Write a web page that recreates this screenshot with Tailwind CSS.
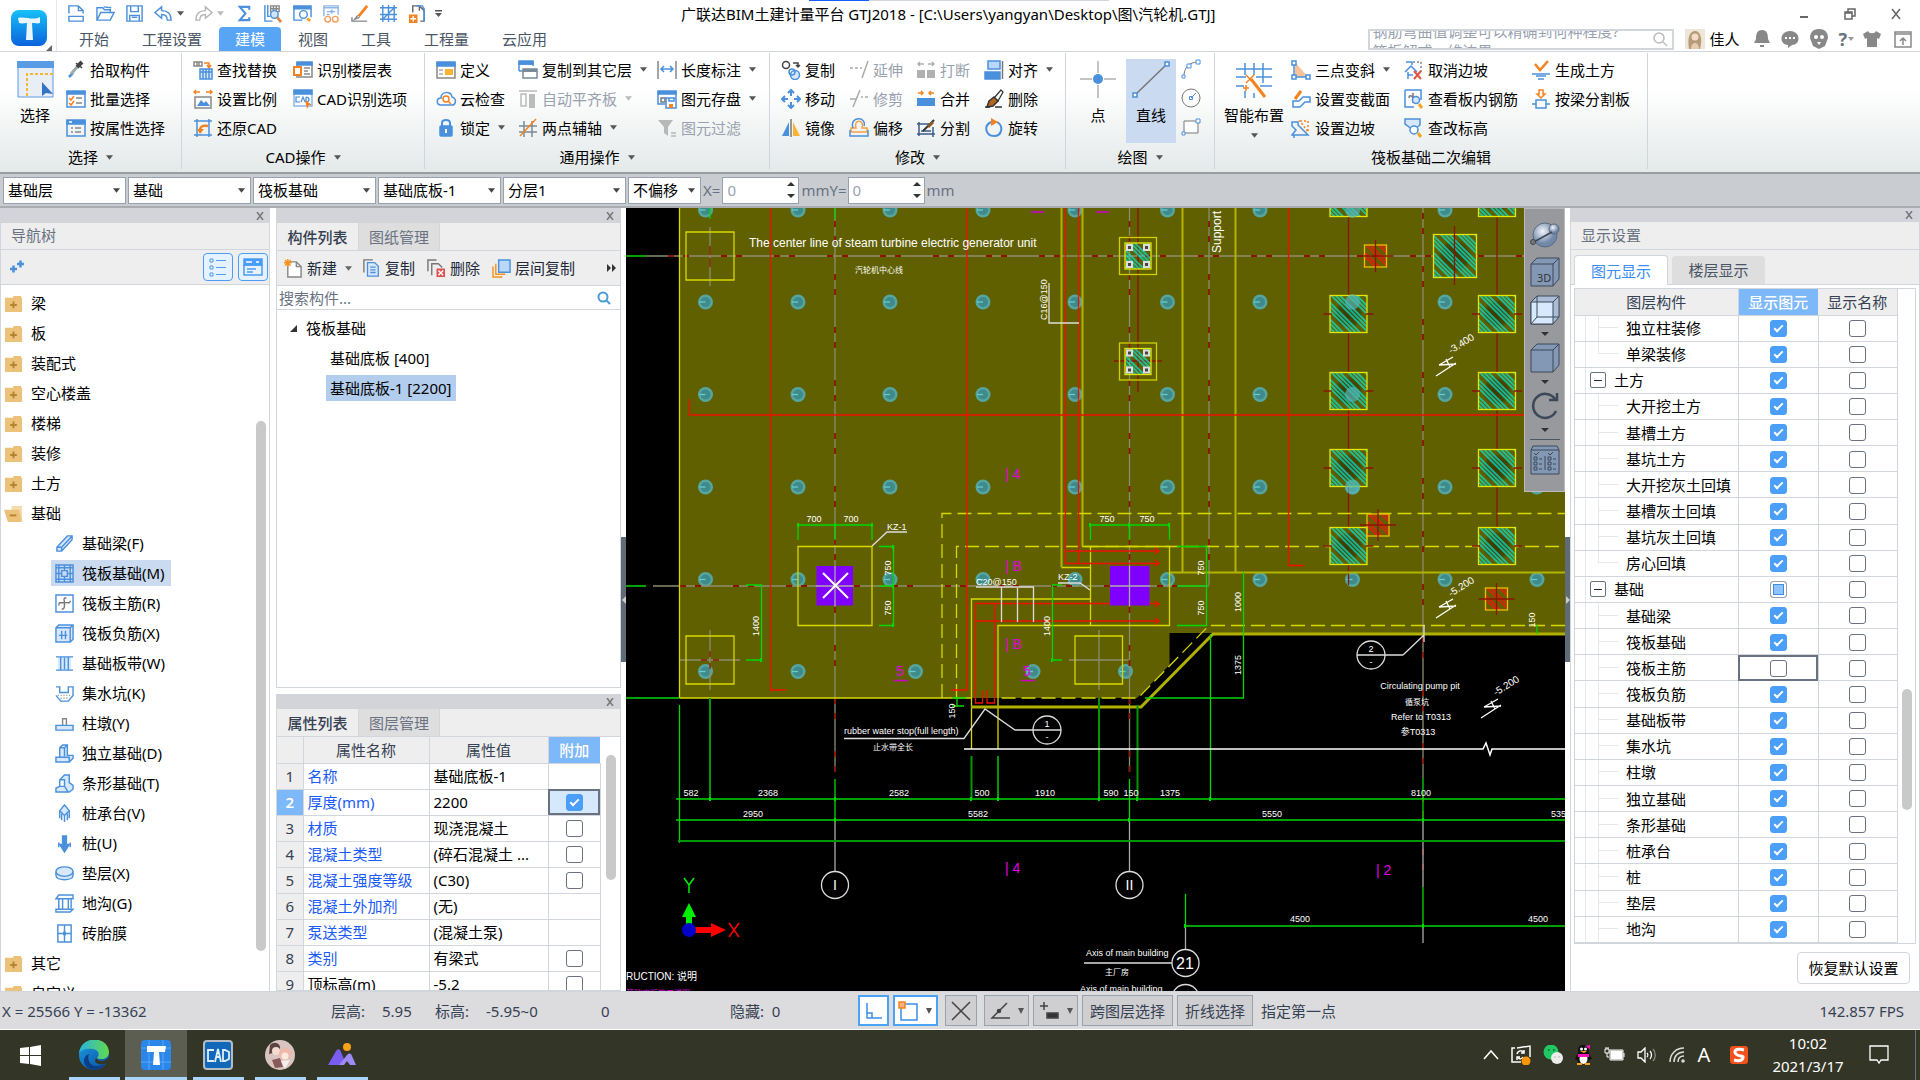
<!DOCTYPE html>
<html lang="zh-CN">
<head>
<meta charset="utf-8">
<title>广联达BIM土建计量平台 GTJ2018</title>
<script src="https://cdn.jsdelivr.net/npm/@tailwindcss/browser@4"></script>
</head>
<body class="h-screen flex flex-col overflow-hidden bg-white text-[15px] leading-5 text-black font-['Noto_Sans','Noto_Sans_CJK_SC',sans-serif]">

<!-- Icon sprite, every symbol on a 20 unit grid; stroke and fill defaults come from the svg that uses it -->
<svg class="absolute size-0" aria-hidden="true">
  <defs>
    <linearGradient id="gApp" x1="0" y1="0" x2="0" y2="1"><stop offset="0" stop-color="#16c0f8"/><stop offset="1" stop-color="#0b62dc"/></linearGradient>
    <linearGradient id="gEdge" x1="0" y1="0" x2="1" y2="1"><stop offset="0" stop-color="#1b9de2"/><stop offset="1" stop-color="#0c4a9e"/></linearGradient>
    <linearGradient id="gEdge2" x1="0" y1="0" x2="1" y2="0"><stop offset="0" stop-color="#28b4dc"/><stop offset="1" stop-color="#62d94e"/></linearGradient>
    <radialGradient id="gBall" cx=".4" cy=".35"><stop offset="0" stop-color="#f2f6fb"/><stop offset="1" stop-color="#7288a8"/></radialGradient>
  </defs>
    <symbol id="q-new" viewBox="0 0 20 20"><path d="M2 10V2h10l5 5v3M12 2v5h5M2 13h15v5H2z"/></symbol>
    <symbol id="q-open" viewBox="0 0 20 20"><path d="M1 17V4h6l2 2h6v3M1 17l4-8h14l-4 8zM8 3l8 1"/></symbol>
    <symbol id="q-save" viewBox="0 0 20 20"><path d="M2 2h16v16H2zM6 2v6h8V2M5 18v-6h10v6M7 14h6"/></symbol>
    <symbol id="q-undo" viewBox="0 0 20 20"><path d="M1 9l7-6v4c7 0 10 3 10 10h-4c0-4-2-6-6-6v4z"/></symbol>
    <symbol id="q-redo" viewBox="0 0 20 20"><path stroke="#b5b5b5" d="M19 9l-7-6v4C5 7 2 10 2 17h4c0-4 2-6 6-6v4z"/></symbol>
    <symbol id="q-sum" viewBox="0 0 20 20"><path stroke-width="2.2" d="M15 6V3H5l6 7-6 7h10v-3"/></symbol>
    <symbol id="q-calc" viewBox="0 0 20 20"><path d="M2 1v17h8M5 1v12h3"/><path stroke="#888" d="M8 2h9v6H8zM11 2v6M14 2v6M8 5h9"/><circle cx="12" cy="11" r="4" fill="#cfe3fa"/><path stroke="#d98a4b" stroke-width="3" d="M15 14l4 5"/></symbol>
    <symbol id="q-find" viewBox="0 0 20 20"><path fill="#4a90dc" d="M1 2h18v3H1z"/><path d="M1 2v15h9M19 5v9"/><circle cx="11" cy="11" r="4"/><path stroke="#f5a623" stroke-width="3" d="M15 15l3 3"/></symbol>
    <symbol id="q-glass" viewBox="0 0 20 20"><path stroke="#8db6e6" d="M2 13V2h15v9M2 4h15M5 8h3M5 11h3M14 8h-5l2-2M9 8l2 2"/><g stroke="#f5a060"><circle cx="6" cy="16" r="3"/><circle cx="14" cy="16" r="3"/></g></symbol>
    <symbol id="q-brush" viewBox="0 0 20 20"><path stroke="#f58220" stroke-width="3" d="M17 2L8 13"/><path stroke="#888" d="M1 14v4h16M7 12l-3 4 5-2"/></symbol>
    <symbol id="q-grid" viewBox="0 0 20 20"><path d="M4 1v18M10 1v18M16 1v18M1 4h18M1 11h18M1 16h18M4 16L16 4"/></symbol>
    <symbol id="q-add" viewBox="0 0 20 20"><path stroke="#666" d="M5 9V2h7l5 5v11h-4M12 2v5"/><path d="M8 2h7l2 3v13"/><path fill="#f58220" stroke="none" d="M1 11h9v9H1z"/><path stroke="#fff" d="M5.500 12.500v6M2.500 15.500h6"/></symbol>

    <symbol id="pick" viewBox="0 0 20 20"><path stroke="#4a90dc" stroke-width="2.500" d="M3 17l4-4"/><path stroke="#9aa" stroke-width="3" d="M5 14l7-8"/><path stroke="#444" stroke-width="4" d="M11 7l5-5"/><path stroke="#444" d="M10 3l6 5"/></symbol>
    <symbol id="batch" viewBox="0 0 20 20"><path d="M1 3h18v15H1z"/><path fill="#4a90dc" d="M1 2h18v3H1z"/><path stroke="#f58220" d="M3 9l2 2 3-4M3 14l2 2 3-4"/><path stroke="#888" d="M10 9h6M10 14h6"/></symbol>
    <symbol id="attr" viewBox="0 0 20 20"><path d="M1 3h18v15H1z"/><path fill="#4a90dc" d="M1 2h18v4H1z"/><path stroke="#fff" d="M3 4h3"/><path stroke="#888" d="M5 10h2M9 10h6M5 14h2M9 14h6"/></symbol>
    <symbol id="replace" viewBox="0 0 20 20"><path stroke="#888" d="M1 2h8v4H1zM4 2v4M6 2v4"/><path stroke="#f58220" d="M11 3h5v4M14 5l2 3 2-3"/><path fill="#d8e8fb" d="M7 9h12v10H7zM7 12h12M10 9v10M13 9v10M16 9v10"/></symbol>
    <symbol id="scale" viewBox="0 0 20 20"><path stroke="#f58220" d="M1 3h6M13 3h6M3 1L1 3l2 2M17 1l2 2-2 2"/><path stroke="#888" d="M2 8h16v11H2z"/><path fill="#4a90dc" stroke="none" d="M4 17l4-6 3 3 2-2 4 5z"/></symbol>
    <symbol id="restore" viewBox="0 0 20 20"><path d="M4 1v18M16 1v18M1 3h18M1 17h18"/><path stroke="#f58220" stroke-width="2.500" d="M7 13c0-5 3-6 8-5"/><path fill="#f58220" stroke="none" d="M4 11h7l-4 5z"/></symbol>
    <symbol id="floor" viewBox="0 0 20 20"><path stroke="#888" d="M4 3h15v14H4z"/><path fill="#4a90dc" d="M4 2h15v3H4z"/><path stroke="#f58220" stroke-width="2" fill="#fff" d="M1 7h7v8H1z"/><path stroke="#888" d="M11 8h6M11 11h4M11 14h6"/></symbol>
    <symbol id="cadopt" viewBox="0 0 20 20"><path stroke="#8db6e6" d="M1 3h18v14H1z"/><path fill="#4a90dc" d="M1 1h18v4H1z"/><path stroke-width="1.200" d="M7 8H3v5h4M8 13l2-5 2 5M13 8v5c4 0 4-5 0-5"/><path fill="#f58220" stroke="none" d="M12 11l7 5-3 0-2 4z"/></symbol>
    <symbol id="define" viewBox="0 0 20 20"><path stroke="#888" d="M1 3h18v15H1z"/><path fill="#4a90dc" d="M1 2h18v4H1z"/><path stroke="#aaa" d="M3 10h4M3 14h4"/><path fill="#f9b233" stroke="none" d="M9 9h8v6H9z"/></symbol>
    <symbol id="cloud" viewBox="0 0 20 20"><path d="M5 16c-5 0-5-7 0-7 0-7 10-7 11-1 5 1 4 8 0 8z"/><circle cx="10" cy="10" r="3" stroke="#f58220"/><path stroke="#f58220" d="M12 12l3 3"/></symbol>
    <symbol id="lock" viewBox="0 0 20 20"><path stroke-width="2" d="M6 9V5c0-4 8-4 8 0v4"/><rect x="4" y="8" width="12" height="10" rx="1" fill="#4a90dc"/><path stroke="#fff" stroke-width="2" d="M10 11v4"/></symbol>
    <symbol id="copyfloor" viewBox="0 0 20 20"><path d="M1 11V2h14v4M1 4h14M1 11h4"/><path fill="#4a90dc" d="M1 1h14v3H1z"/><path fill="#fff" stroke="#7a8a99" d="M5 9h14v9H5z"/><path fill="#7a8a99" stroke="none" d="M5 9h14v3H5z"/></symbol>
    <symbol id="autoalign" viewBox="0 0 20 20"><path stroke="#bbb" d="M1 2h18M3 5h5v12H3z"/><path fill="#bbb" stroke="none" d="M11 5h6v14h-6z"/></symbol>
    <symbol id="axis" viewBox="0 0 20 20"><path stroke="#7a8a99" d="M6 3v16M14 3v16M1 8h18M1 14h18"/><path stroke="#f58220" d="M2 18L18 1"/></symbol>
    <symbol id="length" viewBox="0 0 20 20"><path stroke="#888" d="M1 1v18M19 1v18"/><path d="M4 9h12M7 6L4 9l3 3M13 6l3 3-3 3"/></symbol>
    <symbol id="store" viewBox="0 0 20 20"><path d="M1 3h18v5M1 3v12h7"/><path fill="#4a90dc" d="M1 2h18v3H1z"/><path stroke="#777" d="M4 9h4v4H4z"/><path fill="#fff" d="M9 9h10v10H9zM12 9v3h5V9"/><path fill="#f58220" stroke="none" d="M12 15h4v4h-4z"/></symbol>
    <symbol id="filter" viewBox="0 0 20 20"><path fill="#b8b8b8" stroke="none" d="M1 2h15l-5 7v9l-4-3V9z"/><path stroke="#b8b8b8" d="M14 15h5M14 18h5"/></symbol>
    <symbol id="copy" viewBox="0 0 20 20"><circle cx="5" cy="5" r="3.500" stroke="#444"/><circle cx="14" cy="15" r="4.500" fill="#d8e8fb"/><circle cx="11" cy="12" r="3" /><path stroke="#444" d="M12 3h5v4M15 5l2 2 2-2"/></symbol>
    <symbol id="move" viewBox="0 0 20 20"><path stroke-width="2" d="M10 2v5M10 13v5M2 10h5M13 10h5M7 4l3-3 3 3M7 16l3 3 3-3M4 7l-3 3 3 3M16 7l3 3-3 3"/></symbol>
    <symbol id="mirror" viewBox="0 0 20 20"><path fill="#4a90dc" stroke="none" d="M8 4v14H1z"/><path fill="#f9b233" stroke="none" d="M12 4v14h7z"/><path stroke="#777" d="M10 1v18"/></symbol>
    <symbol id="extend" viewBox="0 0 20 20"><path stroke="#aaa" d="M1 8h3M6 8h3M11 8h2M19 1l-6 17"/></symbol>
    <symbol id="trim" viewBox="0 0 20 20"><path stroke="#aaa" d="M1 10h6M12 8h2M16 8h3M11 1L4 18"/></symbol>
    <symbol id="offset" viewBox="0 0 20 20"><path stroke="#f9a03f" d="M7 10c-3-9 9-9 6 0h5v4H2v-4z"/><path d="M1 12v6h18v-6M4 10c-4-12 14-12 11-2"/></symbol>
    <symbol id="break" viewBox="0 0 20 20"><path fill="#b0b0b0" stroke="none" d="M1 10h8v8H1zM11 10h8v8h-8z"/><path stroke="#b0b0b0" d="M2 4h6M12 4h6M4 2L2 4l2 2M16 2l2 2-2 2"/></symbol>
    <symbol id="merge" viewBox="0 0 20 20"><path fill="#4a90dc" stroke="none" d="M1 9h18v8H1z"/><path stroke="#f58220" d="M2 4h5M13 4h5M5 2l2 2-2 2M15 2l-2 2 2 2"/></symbol>
    <symbol id="split" viewBox="0 0 20 20"><path stroke="#3b5b8c" d="M1 6h12M3 4v14M1 16h18M17 9v10M5 13h10"/><path stroke="#333" stroke-width="2" d="M7 13L18 2"/><path stroke="#8a5a2b" stroke-width="3" d="M12 9l5-5"/></symbol>
    <symbol id="align" viewBox="0 0 20 20"><path fill="#b9d7fa" d="M4 1h12v8H4z"/><path fill="#4a90dc" d="M1 12h15v7H1z"/><path stroke="#777" d="M18.500 1v18"/></symbol>
    <symbol id="erase" viewBox="0 0 20 20"><path stroke="#333" stroke-width="1.200" fill="#fff" d="M10 9l7-8 2 2-5 9z"/><path fill="#b5651d" stroke="#333" d="M5 12l5-4 4 4-5 5-6 1z"/><path stroke="#333" d="M1 18h5M11 18h7"/></symbol>
    <symbol id="rotate" viewBox="0 0 20 20"><path stroke-width="2" d="M7 4C-1 8 2 18 10 18S20 8 13 4"/><path fill="#f58220" stroke="none" d="M7 0l7 4-7 4z"/></symbol>

    <symbol id="slope3" viewBox="0 0 20 20"><path fill="#f9c39a" stroke="none" d="M4 2v15h13z"/><path d="M3 3v14h14" /><path fill="#fff" d="M1 1h4v4H1zM1 15h4v4H1zM15 15h4v4h-4z"/></symbol>
    <symbol id="section" viewBox="0 0 20 20"><path stroke="#f58220" stroke-width="3" d="M10 2L4 10"/><path d="M2 18v-6h6l4-4h7v5h-5l-5 5z"/></symbol>
    <symbol id="slope" viewBox="0 0 20 20"><path d="M1 4h6v3l10 10H1l4-5-4-4zM3 17v3"/><path stroke="#f58220" stroke-dasharray="2 2" d="M9 3h8v11z"/></symbol>
    <symbol id="unslope" viewBox="0 0 20 20"><path d="M2 2h6v3M1 12l6-6 6 6M4 12v7M4 15h5"/><path stroke="#888" stroke-dasharray="2 2" d="M9 2h8v10"/><path stroke="#e05340" stroke-width="2" d="M10 11l7 8M17 11l-7 8"/></symbol>
    <symbol id="viewrebar" viewBox="0 0 20 20"><path d="M1 1h16v10M1 1v17h9"/><path stroke="#777" d="M5 9c0-3 3-3 4 0M9 4v10"/><circle cx="12" cy="11" r="3.500" fill="#d8e8fb"/><path stroke="#f5a623" stroke-width="3" d="M15 15l3 4"/></symbol>
    <symbol id="elev" viewBox="0 0 20 20"><path fill="#d8e8fb" d="M1 1h15v6l-5 4H8L1 6z"/><circle cx="10" cy="12" r="4" fill="#fff"/><path stroke="#f5a623" stroke-width="3" d="M14 15l3 4"/></symbol>
    <symbol id="earth" viewBox="0 0 20 20"><path stroke="#f58220" stroke-width="2.500" d="M4 4l5 6L17 1"/><path d="M1 14h18M5 16h10M7 19h6"/></symbol>
    <symbol id="beamsplit" viewBox="0 0 20 20"><path stroke="#f58220" d="M8 1h4v4h2l-4 4-4-4h2z"/><path d="M5 11h10v8H5zM1 15h4M15 15h4"/></symbol>

    <symbol id="n-beam" viewBox="0 0 20 20"><path fill="#d8e8fb" d="M2 14L13 2h5v4L7 18H2zM2 14h5v4M7 14L18 2"/></symbol>
    <symbol id="n-raft" viewBox="0 0 20 20"><path d="M1 1h18v18H1zM4 1v18M16 1v18M1 4h18M1 16h18M7 7h6v6H7zM10 1v6M10 13v6M1 10h6M13 10h6"/></symbol>
    <symbol id="n-main" viewBox="0 0 20 20"><path d="M1 1h18v18H1z"/><path stroke="#777" d="M4 12c0-3 0-3 6-3 5 0 6 1 6-2M12 4c-4 0-2 2-2 6s0 6-3 6"/></symbol>
    <symbol id="n-neg" viewBox="0 0 20 20"><path fill="#d8e8fb" d="M1 4l3-3h15v15l-3 3H1zM1 4h15v15M16 4l3-3M4 12h9M7 7v9M11 7v9"/></symbol>
    <symbol id="n-band" viewBox="0 0 20 20"><path fill="#d8e8fb" stroke="none" d="M3 3h14v14H3z"/><path d="M1 3h18M1 17h18M6 3v14M14 3v14M10 4v12"/></symbol>
    <symbol id="n-pit" viewBox="0 0 20 20"><path d="M1 3h4v6h9V3h5v9l-5 6H6l-5-6"/><path stroke="#888" stroke-dasharray="1 2" d="M3 12h14M6 15h9"/></symbol>
    <symbol id="n-pier" viewBox="0 0 20 20"><path stroke="#888" d="M8 12V5h4v7"/><path fill="#d8e8fb" d="M1 12h18v5H1z"/></symbol>
    <symbol id="n-iso" viewBox="0 0 20 20"><path fill="#d8e8fb" d="M1 14h4V4l3-3h5v11h6v3l-4 4H1zM5 14h10v5M5 4h5l3-3M10 4v9"/></symbol>
    <symbol id="n-strip" viewBox="0 0 20 20"><path fill="#d8e8fb" d="M1 19v-4l4-2V6l5-5h5v8l4 3v4l-4 3zM5 13h5V6H5M10 13l4 6"/></symbol>
    <symbol id="n-cap" viewBox="0 0 20 20"><path fill="#d8e8fb" d="M10 1l5 6-5 5-5-5z"/><path d="M5 7v8M15 7v8M10 12v7M7 10v7M13 10v7"/></symbol>
    <symbol id="n-pile" viewBox="0 0 20 20"><path fill="#4a90dc" d="M8 2h4v9h3l-5 8-5-8h3z"/><path d="M4 9v5M16 9v5"/></symbol>
    <symbol id="n-cush" viewBox="0 0 20 20"><path fill="#d8e8fb" d="M1 8v4c0 6 18 6 18 0V8"/><ellipse cx="10" cy="8" rx="9" ry="5" fill="#d8e8fb"/></symbol>
    <symbol id="n-ditch" viewBox="0 0 20 20"><path d="M1 5l3-4h15v4H1zM4 5v11M8 5v11M14 5v11M17 4v11M1 16h18l-3 3H1z"/></symbol>
    <symbol id="n-brick" viewBox="0 0 20 20"><path d="M3 1h14v18H3zM10 1v18M3 10h14"/><path stroke-width="3" d="M10 8v4"/></symbol>
    <symbol id="folder" viewBox="0 0 20 20"><path fill="#ecc27a" stroke="none" d="M10 2h8v3h-9zM1 4h18v15H1z"/><path stroke="#b5842f" stroke-width="2" d="M10 8v7M6.500 11.500h7"/></symbol>
    <symbol id="folder-open" viewBox="0 0 20 20"><path fill="#f5dcae" stroke="none" d="M8 2h11v15H8z"/><path fill="#ecc27a" stroke="none" d="M0 6h16l3 13H4z"/><path stroke="#b5842f" stroke-width="2" d="M6 12h7"/></symbol>
</svg>

<header class="relative shrink-0">
  <div class="absolute top-0 left-[809px] w-[60px] h-px bg-blue-600"></div>
  <div class="absolute top-0 left-[869px] w-[240px] h-px bg-gray-300"></div>
  <div class="flex h-[51px] border-b border-gray-300 box-content">
    <button class="relative w-[57px] shrink-0 border-r border-gray-200" aria-label="应用菜单">
      <svg class="ml-[11px] mt-1 size-[36px]" viewBox="0 0 36 36"><rect width="36" height="36" rx="8" fill="url(#gApp)"/><path fill="#e9f6ff" d="M7 8c7-2 15 3 22-1v6c-3 1-5 0-8 0l1 17h-7l1-17c-3 0-5 1-8 0z"/></svg>
      <svg class="absolute right-1 bottom-0 size-[6px]" viewBox="0 0 6 6"><path fill="#666" d="M6 0v6H0z"/></svg>
    </button>
    <div class="flex-1 flex flex-col min-w-0">
      <div class="h-[27px] flex items-center">
        <div id="quick" class="flex items-center w-[386px] shrink-0 pl-[10px]"></div>
        <h1 class="flex-1 pl-[238px] text-[15px] whitespace-nowrap">广联达BIM土建计量平台 GTJ2018 - [C:\Users\yangyan\Desktop\图\汽轮机.GTJ]</h1>
        <div class="flex gap-[34px] pr-[18px]">
          <button aria-label="最小化"><svg class="size-3" viewBox="0 0 12 12"><path stroke="#666" stroke-width="2" d="M2 9h8"/></svg></button>
          <button aria-label="还原"><svg class="size-3" viewBox="0 0 12 12" fill="none" stroke="#666" stroke-width="1.500"><path d="M4 4V1h7v7H8M1 4h7v7H1zM1 5h7"/></svg></button>
          <button aria-label="关闭"><svg class="size-3" viewBox="0 0 12 12"><path stroke="#666" stroke-width="1.500" d="M2 1l8 10M10 1L2 11"/></svg></button>
        </div>
      </div>
      <div class="h-6 flex items-center">
        <nav id="tabs" class="flex gap-px pl-[6px] h-full"></nav>
        <div class="flex-1"></div>
        <label class="relative w-[306px] h-[21px] border-2 border-gray-300 overflow-hidden text-gray-400 flex">
          <span class="absolute -top-2 left-0.5 text-[15px] leading-4 whitespace-nowrap">钢筋弯曲值调整可以精确到何种程度?</span>
          <span class="absolute top-3 left-0.5 text-[15px] leading-4 whitespace-nowrap">筏板解式一维边界</span>
          <input type="search" aria-label="搜索帮助" class="relative w-full bg-transparent outline-none">
          <svg class="absolute right-1 top-0 size-4" viewBox="0 0 16 16" fill="none" stroke="#bbb" stroke-width="1.500"><circle cx="7" cy="7" r="5"/><path d="M11 11l4 4"/></svg>
        </label>
        <a href="#" class="ml-[11px] flex items-center gap-1"><svg class="w-[20px] h-[20px]" viewBox="0 0 20 20"><rect width="20" height="20" fill="#efe6da"/><path fill="#b59b78" d="M4 20C2 8 5 2 10 2s8 7 5 18z"/><circle cx="10" cy="8" r="3.500" fill="#f6dcc6"/><path fill="#e9c9b0" d="M6 20c0-8 8-8 8 0z"/></svg>佳人</a>
        <div class="flex items-center gap-[9px] ml-[14px] pr-2">
          <svg class="size-[18px]" viewBox="0 0 18 18" fill="#888"><path d="M9 0c5 0 6 4 6 9l2 4H1l2-4c0-5 1-9 6-9zM7 15h4v2H7z"/></svg>
          <svg class="size-[20px]" viewBox="0 0 20 20" fill="#888"><path d="M10 2c11 0 11 14 2 14l-4 3v-3C-1 16-1 2 10 2z"/><path fill="#fff" d="M5 8h2v2H5zM9 8h2v2H9zM13 8h2v2h-2z"/></svg>
          <svg class="size-[20px]" viewBox="0 0 20 20" fill="#888"><path d="M10 0c8 0 9 6 9 9l-3 8-6 3-6-3-3-8c0-3 1-9 9-9z"/><circle cx="7" cy="8" r="2" fill="#fff"/><circle cx="13" cy="8" r="2" fill="#fff"/><path fill="#fff" d="M8 13h4l-2 3z"/></svg>
          <span class="text-lg text-gray-500 font-bold">?</span><svg class="-ml-2 size-[6px]" viewBox="0 0 6 6"><path fill="#999" d="M0 1h6L3 5z"/></svg>
          <svg class="size-[18px]" viewBox="0 0 18 18" fill="#888"><path d="M5 1c1 3 7 3 8 0l5 3-2 5-2-1v9H4V8L2 9 0 4z"/></svg>
          <svg class="size-[18px] ml-1" viewBox="0 0 18 18" fill="none" stroke="#888" stroke-width="1.500"><path d="M1 2h16v15H1zM1 4h16M9 15V8M6 11l3-3 3 3"/></svg>
        </div>
      </div>
    </div>
  </div>
  <div id="ribbon" class="flex h-[120px] bg-linear-to-b from-white from-30% to-[#e4e9e9] pt-px pb-[3px]"></div>
  <div class="h-[36px] border-t-2 border-t-[#9a9da0] border-b-2 border-b-[#a9adb2] bg-[#c9ccd1] flex items-center gap-[2px] pl-[3px] text-gray-500">
    <span id="combos" class="flex gap-[2px] text-black"></span>
    <label class="flex items-center">X=<input value="0" class="ml-0.5 w-[77px] h-[27px] border border-gray-400 bg-white px-1 text-gray-400"><svg class="-ml-3 mr-[6px] w-2 h-4" viewBox="0 0 8 16"><path fill="#333" d="M0 4l4-4 4 4zM0 12l4 4 4-4z"/></svg>mm</label>
    <label class="flex items-center -ml-0.5">Y=<input value="0" class="ml-px w-[77px] h-[27px] border border-gray-400 bg-white px-1 text-gray-400"><svg class="-ml-3 mr-[6px] w-2 h-4" viewBox="0 0 8 16"><path fill="#333" d="M0 4l4-4 4 4zM0 12l4 4 4-4z"/></svg>mm</label>
  </div>
</header>

<main class="flex-1 min-h-0 flex bg-white">
  <!-- Navigation tree -->
  <section class="w-[270px] shrink-0 flex flex-col border-x border-gray-300">
    <div class="h-[15px] shrink-0 bg-[#d2d4d9] flex justify-end items-center pr-[5px]"><button aria-label="关闭导航树"><svg class="size-2" viewBox="0 0 8 8"><path stroke="#777" stroke-width="1.500" d="M1 0l6 8M7 0L1 8"/></svg></button></div>
    <h2 class="h-[27px] shrink-0 bg-[#eee] border-b border-gray-300 pl-[10px] leading-6 text-gray-500">导航树</h2>
    <div class="h-[35px] shrink-0 bg-[#eee] border-b border-gray-300 flex items-center pl-2 pr-px gap-[5px]">
      <svg class="size-4 mr-auto" viewBox="0 0 16 16" stroke="#4a90dc" stroke-width="2.500"><path d="M1 10h7M4.500 6.500v7M8 5h7M11.500 1.500v7"/></svg>
      <button aria-label="列表视图" class="w-[30px] h-[28px] rounded border border-[#4a9cf5] bg-[#e6f2ff] grid place-items-center"><svg class="size-5" viewBox="0 0 20 20" fill="none" stroke="#4a9cf5"><path d="M2 2h3v3H2zM2 9h3v3H2zM2 16h3v3H2zM8 3.500h10M8 10.500h10M8 17.500h10"/></svg></button>
      <button aria-label="面板视图" class="w-[30px] h-[28px] rounded border border-[#4a9cf5] bg-[#e6f2ff] grid place-items-center"><svg class="size-5" viewBox="0 0 20 20" fill="none" stroke="#4a9cf5" stroke-width="1.500"><path fill="#4a9cf5" d="M1 2h18v6H1z"/><path stroke="#fff" d="M3 5h6M13 5h3"/><path d="M1 8h18v10H1zM4 12h9M4 15h6"/></svg></button>
    </div>
    <div class="flex-1 min-h-0 flex overflow-hidden">
      <ul id="nav" class="flex-1 pt-[3px] overflow-hidden"></ul>
      <div class="w-[13px]"><div class="mt-[136px] h-[530px] w-[10px] rounded-full bg-[#c9c9c9]"></div></div>
    </div>
  </section>

  <div class="w-[6px] shrink-0"></div>

  <!-- Component list and properties -->
  <section class="w-[345px] shrink-0 flex flex-col">
    <div class="flex-1 min-h-0 flex flex-col border border-t-0 border-gray-300">
      <div class="h-[15px] shrink-0 bg-[#d2d4d9] flex justify-end items-center pr-[6px]"><button aria-label="关闭构件列表"><svg class="size-2" viewBox="0 0 8 8"><path stroke="#777" stroke-width="1.500" d="M1 0l6 8M7 0L1 8"/></svg></button></div>
      <div class="h-[28px] shrink-0 flex bg-[#eee] border-b border-gray-300">
        <button class="w-[81px] font-medium text-gray-700">构件列表</button><button class="w-[82px] bg-[#dedede] border-x border-gray-300 text-gray-500">图纸管理</button>
      </div>
      <div class="h-[35px] shrink-0 flex items-center bg-[#eee] border-b border-gray-300 text-gray-800 whitespace-nowrap pl-[7px]">
        <button class="flex items-center gap-1 w-[79px]"><svg class="size-[19px]" viewBox="0 0 20 20" fill="#fff" stroke="#888" stroke-width="1.500"><path d="M4 3h9l5 5v11H4zM13 3v5h5"/><path stroke="#f5921e" d="M4 0v8M0 4h8M1 1l6 6M7 1L1 7"/></svg>新建<svg class="size-[7px] ml-1" viewBox="0 0 6 6"><path fill="#666" d="M0 1h6L3 5z"/></svg></button>
        <button class="flex items-center gap-1 w-[64px]"><svg class="size-[18px]" viewBox="0 0 20 20" fill="none" stroke="#777" stroke-width="1.500"><path d="M1 15V1h10"/><path fill="#d8e8fb" stroke="#4a90dc" d="M5 4h8l4 4v11H5zM8 9h6M8 12h6M8 15h6"/></svg>复制</button>
        <button class="flex items-center gap-1 w-[65px]"><svg class="size-[19px]" viewBox="0 0 20 20" fill="none" stroke="#777" stroke-width="1.500"><path d="M1 13V1h9M5 17V5h7l4 4"/><path fill="#e05050" stroke="none" d="M10 10h9v9h-9z"/><path stroke="#fff" d="M12 12l5 5M17 12l-5 5"/></svg>删除</button>
        <button class="flex items-center gap-1"><svg class="size-[19px]" viewBox="0 0 20 20" fill="none" stroke="#f5921e" stroke-width="1.500"><path d="M1 8v11h10M4 5v11h10"/><path fill="#b9d7fa" stroke="#4a90dc" d="M7 1h12v13H7z"/></svg>层间复制</button>
        <svg class="ml-auto mr-1 w-[9px] h-2" viewBox="0 0 9 8" fill="#333"><path d="M0 0l4 4-4 4zM5 0l4 4-4 4z"/></svg>
      </div>
      <label class="h-[24px] shrink-0 flex items-center border-b border-gray-300 pr-[9px]"><input type="search" placeholder="搜索构件..." aria-label="搜索构件" class="flex-1 px-0.5 outline-none placeholder:text-gray-500"><svg class="size-[14px]" viewBox="0 0 14 14" fill="none" stroke="#4a9ad5" stroke-width="2"><circle cx="6" cy="6" r="4.500"/><path d="M9 9l4 4"/></svg></label>
      <ul class="flex-1 pt-[3px]">
        <li class="h-[30px] flex items-center pl-[13px] gap-[9px]"><svg class="size-[7px]" viewBox="0 0 7 7"><path fill="#333" d="M7 0v7H0z"/></svg>筏板基础</li>
        <li class="h-[30px] flex items-center pl-[53px]">基础底板 [400]</li>
        <li class="h-[30px] flex items-center pl-[49px]"><span class="h-[26px] leading-[26px] px-1 bg-[#b3cdee]">基础底板-1 [2200]</span></li>
      </ul>
    </div>
    <div class="h-[297px] mt-[6px] shrink-0 flex flex-col border border-gray-300">
      <div class="h-[14px] shrink-0 bg-[#d2d4d9] flex justify-end items-center pr-[6px]"><button aria-label="关闭属性列表"><svg class="size-2" viewBox="0 0 8 8"><path stroke="#777" stroke-width="1.500" d="M1 0l6 8M7 0L1 8"/></svg></button></div>
      <div class="h-[28px] shrink-0 flex bg-[#eee] border-b border-gray-300">
        <button class="w-[81px] font-medium text-gray-700">属性列表</button><button class="w-[82px] bg-[#dedede] border-x border-gray-300 text-gray-500">图层管理</button>
      </div>
      <div class="flex-1 min-h-0 flex overflow-hidden">
        <table class="w-[323px] shrink-0 table-fixed border-collapse self-start">
          <colgroup><col class="w-[26px]"><col class="w-[126px]"><col class="w-[119px]"><col class="w-[52px]"></colgroup>
          <thead><tr class="h-[26px] bg-[#eee] text-gray-700"><th class="border-b border-r border-gray-300"></th><th class="font-normal border-b border-r border-gray-300">属性名称</th><th class="font-normal border-b border-r border-gray-300">属性值</th><th class="font-medium bg-[#7db8f8] text-white">附加</th></tr></thead>
          <tbody id="props"></tbody>
        </table>
        <div class="mt-[18px] ml-[5px] w-[10px] h-[125px] rounded-full bg-[#c9c9c9]"></div>
      </div>
    </div>
  </section>

  <div class="w-[5px] shrink-0 flex items-center"><button aria-label="折叠左侧面板" class="w-full h-[125px] bg-[#5f6b76] grid place-items-center"><svg class="w-1 h-2" viewBox="0 0 4 8"><path fill="#ccc" d="M4 0v8L0 4z"/></svg></button></div>

  <!-- Drawing canvas -->
  <section class="flex-1 min-w-0 relative bg-black overflow-hidden">
    <svg class="absolute inset-0 size-full font-['Liberation_Sans_Narrow','Liberation_Sans','Noto_Sans_CJK_SC',sans-serif]" viewBox="626 208 939 783" preserveAspectRatio="xMinYMin slice" fill="none" stroke-width="1.300">
      <defs>
        <pattern id="hc" width="12" height="12" patternUnits="userSpaceOnUse" patternTransform="rotate(-45)"><path stroke="#00f0e4" stroke-width="1.300" d="M1 0v12M4 0v12M7 0v12"/></pattern>
        <pattern id="hr" width="9" height="9" patternUnits="userSpaceOnUse" patternTransform="rotate(-45)"><path stroke="#ff1010" stroke-width="1.500" d="M1 0v9M4 0v9"/></pattern>
        <radialGradient id="gh"><stop offset="0" stop-color="#3a3a00"/><stop offset=".6" stop-color="#474700"/><stop offset=".8" stop-color="#606000"/></radialGradient>
        <g id="pile"><circle r="7.500" fill="#55a5a0"/><circle r="5" fill="#3f8a8a"/><path stroke="#6cc" d="M-6 0h6"/></g>
        <g id="sq"><rect x="-18.500" y="-18.500" width="37" height="37" fill="url(#gh)"/><rect x="-18.500" y="-18.500" width="37" height="37" fill="url(#hc)" stroke="#e6e600"/><path stroke="#8a1500" d="M-25 0h8M17 0h8"/></g>
        <g id="sqr"><rect x="-11" y="-11" width="22" height="22" fill="url(#hr)" stroke="#e6c000"/><path stroke="#8a1500" d="M-18 0h36M0-16v32"/></g>
        <g id="col"><rect x="-18.500" y="-18.500" width="37" height="37" stroke="#d0d000"/><rect x="-13" y="-13" width="26" height="26" fill="url(#hc)" stroke="#e6e600"/><path fill="#444" stroke="#ddd" stroke-width="2" d="M-11-11h5v5h-5zM6-11h5v5H6zM-11 6h5v5h-5zM6 6h5v5H6z"/></g>
        <g id="lvl" stroke="#fff"><path d="M-20 16L0 3M-17 5l17-1M-17 5l14-8M-10-1l4 8"/></g>
      </defs>
      <path fill="#606000" d="M679.500 207H1565V633H1169.500V665L1137 698H679.500z"/>
      <g id="piles"></g>
      <!-- axes -->
      <g stroke="#8c8c70">
        <path d="M646 256H1524M653 586H1209M835 207V772M1129.500 207V772M1209 207V585M1423 207V778M710 227V286M680 660H740M710 630V690M1069 660H1130M1099 630V690"/>
        <path stroke="#8a1500" stroke-width="1.800" stroke-dasharray="6 9 6 32" d="M668 256H1524M680 586H1209M835 221V772M1129.500 221V772M1209 221V585M1423 213V885"/>
        <path stroke="#8a1500" d="M710 246v9M710 258v9M701 660h6M713 660h6M710 651v6M710 663v6M1348.500 207V585M1497 207V550M1138 207V392M1114 361h48"/>
        <path stroke="#aaa" d="M835 820v51M1129.500 820v51M1423 820v67M1423 926v17M1185.500 926v23"/>
      </g>
      <!-- footing outlines -->
      <g stroke="#d8d800">
        <path d="M679.500 207V698M686 232h48v48h-48zM686 636h48v48h-48zM798 546.500h74v79h-74zM1090.500 546.500h79v79h-79zM1075 636h47.500v48H1075zM679.500 698H971M1082 546.500h9M971.500 749V599H1090M998 749V625.500H1090M1061.500 567.500h29"/>
        <path stroke="#b4b400" stroke-width="2" d="M1061.500 207V567M1082.500 207V546M1182.500 207V572M1235.500 207V572.500M1170 572.500H1565"/>
        <path stroke-dasharray="14 6" d="M942 698V513.500H1565M956.500 698V546.500H1565M1565 625.500H1209L1138 698H998"/>
        <path stroke="#b0b000" stroke-width="3" d="M1565 634H1213L1141 707H971"/>
      </g>
      <g stroke="#f01000">
        <path d="M770.500 207V690H786M967 207V690H951M689.500 399V415H1524M1288.500 207V565.500H1304M1065.500 207V563.500H1159M1078.500 207V563M1065 551H1159M975.500 700V603.500H1159M975.500 621H1159M994.500 603V703H987V690M975.500 700v3h7v-12M1155 548l4 3-4 3M1155 560l4 3-4 3M1155 601l4 3-4 3M1155 618l4 3-4 3"/>
      </g>
      <g id="blocks"></g>
      <path fill="#8000ff" d="M816.500 566H853V605.500H816.500zM1110 566H1149.500V605.500H1110z"/>
      <path stroke="#aaa" d="M835 566v40M1129.500 566v40M816 586h37M1110 586h40"/>
      <path stroke="#fff" stroke-width="2" d="M823 573l25 25M848 573l-25 25"/>
      <!-- dimensions -->
      <g stroke="#00d800">
        <path d="M626 256h20M626 586h20M626 698h53M835 207v12M710 207v12M798 540V525H872V540M835 525V540M1090.500 540V525H1169.500V540M1129.500 525V540M879 546.500H893.500V625.500H879M879 586H893M746 585H761.500V660H746M1062 585H1052.500V660H1062M1177 546.500H1206.500V625.500H1177M1177 586H1206M1243.500 572V698H1145M957 698v8M952 698h14M952 706h12M1537 625v9M1185.500 894V926H1565M1423 887v39"/>
        <path d="M679.500 705V843M676 799H1565M676 820H1565M835 779V820M1129.500 779V820M1210.500 634V799M1423 778V820"/>
        <path stroke="#009800" stroke-width="2" d="M678 841H1565M710 698V799M971.500 756V799M998 756V799M1099 698V799M1137.500 705V799"/>
        <path stroke-width="4" stroke-dasharray="3 400" d="M834 799h2M709 799h2M970 799h2M997 799h2M1098 799h2M1136 799h2M1209 799h2M834 820h2M1128 820h2M1422 820h2M1184 926h2M1422 926h2M797 525h2M834 525h2M871 525h2M1089 525h2M1128 525h2M1168 525h2M892 547h2M892 586h2M892 625h2M760 660h2M1051 660h2"/>
      </g>
      <g stroke="#ddd">
        <path d="M872 546l15-14h20M1049 283V323H1079M976 587H1034M1001.500 587V622M1017.500 588V622M1033.500 587V622M1058 583H1080L1090 590M844 738.500H964L985 709L1015 730H1061M1084 963H1172M1403 655L1424 635M1357 655H1403M1424 625V642"/>
        <path stroke="#fff" stroke-width="1.500" d="M964 749H1483L1486 743L1490 755L1492 749H1565"/>
        <circle cx="1047" cy="730" r="14"/><circle cx="1371" cy="655" r="14"/><circle cx="835" cy="885" r="13.500"/><circle cx="1129.500" cy="885" r="13.500"/><circle cx="1185.500" cy="963" r="13.500"/><circle cx="1185.500" cy="998" r="13.500"/>
      </g>
      <use href="#lvl" x="1456" y="360"/><use href="#lvl" x="1456" y="602"/><use href="#lvl" x="1501" y="702"/>
      <g fill="#fff">
        <text x="749" y="247" font-size="12">The center line of steam turbine electric generator unit</text>
        <g font-size="8" text-anchor="middle"><text x="879" y="273">汽轮机中心线</text><text x="893" y="750">止水带全长</text><text x="1417" y="705">循泵坑</text><text x="1117" y="975">主厂房</text></g>
        <text x="844" y="734" font-size="9">rubber water stop(full length)</text>
        <g id="dims" font-size="9" text-anchor="middle"></g>
        <g font-size="9" text-anchor="middle"><text x="1420" y="689">Circulating pump pit</text><text x="1421" y="720">Refer to T0313</text><text x="1418" y="735">参T0313</text></g>
        <g font-size="9"><text x="1086" y="956">Axis of main building</text><text x="1080" y="992">Axis of main building</text><text x="976" y="585">C20@150</text><text x="887" y="530">KZ-1</text><text x="1058" y="580">KZ-2</text></g>
        <text x="626" y="980" font-size="10">RUCTION: 说明</text>
        <text transform="translate(1047 320) rotate(-90)" font-size="9">C16@150</text>
        <text transform="translate(1221 253) rotate(-90)" font-size="12">Support p</text>
        <g font-size="10"><text transform="translate(1451 354) rotate(-32)">-3.400</text><text transform="translate(1451 597) rotate(-32)">-5.200</text><text transform="translate(1496 696) rotate(-32)">-5.200</text></g>
        <g text-anchor="middle"><text x="835" y="890" font-size="14">I</text><text x="1129.500" y="890" font-size="14">II</text><text x="1185" y="969" font-size="16">21</text></g>
      </g>
      <g fill="#e000e0" font-size="14">
        <text x="1005" y="479">| 4</text><text x="1005" y="571">| B</text><text x="1005" y="649">| B</text><text x="1005" y="873">| 4</text><text x="1376" y="875">| 2</text><text x="896" y="676">5</text><text x="1023" y="676">5</text>
        <path stroke="#d000d0" d="M894 680.500h14M1021 680.500h14M1031 212h13M1096 212h13"/>
        <text x="626" y="996" font-size="8">基础底板施工说明</text>
      </g>
      <g stroke="none"><path fill="#00f000" d="M686 925V917H682L689 903L696 917H692V925z"/><path fill="#f00" d="M695 927H711V923L726 930L711 937V933H695z"/><circle cx="689" cy="930" r="7" fill="#0000c8"/></g>
      <path stroke="#00f000" stroke-width="1.500" d="M684 878l5 7 5-7M689 885v8"/><path stroke="#f00" stroke-width="1.500" d="M729 923l10 14M739 923l-10 14"/>
    </svg>
    <div class="absolute right-0 top-0 w-[41px] h-[284px] bg-[#97999d] border border-[#b9bbbe] flex flex-col items-center pt-3 gap-[5px]">
      <svg class="w-[30px] h-[28px] mb-[3px]" viewBox="0 0 30 28"><circle cx="15" cy="14" r="12" fill="url(#gBall)" stroke="#5a6a80"/><circle cx="24" cy="8" r="5" fill="url(#gBall)" stroke="#5a6a80"/><path stroke="#3c4858" stroke-width="1.500" d="M2 22L22 11"/><circle cx="3" cy="21" r="2.500" fill="#777" stroke="#444"/></svg>
      <svg class="size-[30px] mb-[3px]" viewBox="0 0 30 30" fill="#8398b5" stroke="#3c4858"><path d="M1 7l6-6h22v21l-6 7H1zM1 7h22v22M23 7l6-6"/><text x="7" y="25" font-size="11" fill="#333" stroke="none">3D</text></svg>
      <svg class="size-[30px]" viewBox="0 0 30 30" stroke="#3c4858"><path fill="#a9bdd6" d="M1 7l6-6h22v21l-6 7H1z"/><path fill="#d6e9ff" d="M1 7h22v22H1z"/><path fill="none" d="M23 7l6-6M7 1v21h22M7 22l-6 7"/></svg>
      <svg class="size-2" viewBox="0 0 8 8"><path fill="#333" d="M0 2h8L4 6z"/></svg>
      <svg class="size-[30px]" viewBox="0 0 30 30" fill="#8398b5" stroke="#3c4858"><path d="M1 7l6-6h22v21l-6 7H1zM1 7h22v22M23 7l6-6"/></svg>
      <svg class="size-2" viewBox="0 0 8 8"><path fill="#333" d="M0 2h8L4 6z"/></svg>
      <svg class="size-[30px]" viewBox="0 0 30 30" fill="none" stroke="#3c4858" stroke-width="2.500"><path d="M25 8a12 12 0 1 0 1 12M19 9h8V2"/></svg>
      <svg class="size-2" viewBox="0 0 8 8"><path fill="#333" d="M0 2h8L4 6z"/></svg>
      <div class="w-[30px] h-px bg-gray-600"></div>
      <svg class="size-[30px] shrink-0" viewBox="0 0 30 30" fill="#8398b5" stroke="#3c4858"><path d="M1 5l2-4h24l2 4v24H1zM1 5h28M15 11v14M4 8l2 2 3-3M18 8l2 2 3-3M4 12h3v3H4zM4 17h3v3H4zM4 22h3v3H4zM9 14h3M9 19h3M9 24h3M18 12h3v3h-3zM18 17h3v3h-3zM18 22h3v3h-3zM23 14h3M23 19h3M23 24h3"/></svg>
    </div>
  </section>

  <div class="w-[5px] shrink-0 flex items-center"><button aria-label="折叠右侧面板" class="w-full h-[125px] bg-[#5f6b76] grid place-items-center"><svg class="w-1 h-2" viewBox="0 0 4 8"><path fill="#ccc" d="M0 0v8l4-4z"/></svg></button></div>

  <!-- Display settings -->
  <section class="w-[350px] shrink-0 flex flex-col border-x border-gray-300">
    <div class="h-[14px] shrink-0 bg-[#d2d4d9] flex justify-end items-center pr-[6px]"><button aria-label="关闭显示设置"><svg class="size-2" viewBox="0 0 8 8"><path stroke="#777" stroke-width="1.500" d="M1 0l6 8M7 0L1 8"/></svg></button></div>
    <h2 class="h-[28px] shrink-0 bg-[#eee] border-b border-gray-300 pl-[10px] leading-[26px] text-gray-500">显示设置</h2>
    <div class="h-[35px] shrink-0 bg-[#eee] border-b border-gray-300 flex items-end gap-1 px-[3px]">
      <button class="w-[94px] h-[30px] -mb-px rounded-t border border-b-0 border-gray-300 bg-white text-[#3a8ef0]">图元显示</button>
      <button class="w-[93px] h-[28px] rounded-t bg-[#dedede] text-gray-600">楼层显示</button>
    </div>
    <div class="flex-1 min-h-0 mx-[3px] mt-[3px] border border-gray-300 flex">
      <table class="w-[322px] h-full shrink-0 table-fixed border-collapse">
        <colgroup><col class="w-[163px]"><col class="w-[80px]"><col class="w-[79px]"></colgroup>
        <thead><tr class="h-[26px] bg-[#eee] text-gray-700"><th class="h-[26px] font-normal border-b border-r border-gray-300">图层构件</th><th class="font-medium bg-[#7db8f8] text-white">显示图元</th><th class="font-normal border-b border-r border-gray-300">显示名称</th></tr></thead>
        <tbody id="layers"></tbody>
      </table>
      <div class="ml-1 mt-[400px] w-[10px] h-[121px] rounded-full bg-[#c9c9c9]"></div>
    </div>
    <div class="h-[47px] shrink-0 flex justify-end items-center pr-[9px]"><button class="w-[113px] h-[32px] rounded border border-gray-300 bg-white">恢复默认设置</button></div>
  </section>
</main>

<footer class="shrink-0">
  <div class="h-[38px] bg-[#dcdcde] border-t border-gray-300 flex items-center text-gray-700 whitespace-nowrap pl-[2px]">
    <span class="w-[329px]">X = 25566 Y = -13362</span>
    <span class="w-[51px]">层高:</span><span class="w-[53px]">5.95</span><span class="w-[51px]">标高:</span><span class="w-[115px]">-5.95~0</span><span class="w-[129px]">0</span><span class="w-[128px]">隐藏: &nbsp;0</span>
    <div class="flex h-[31px] gap-1">
      <button aria-label="正交" class="w-[31px] border-2 border-[#4aa3f5] bg-white grid place-items-center"><svg class="size-5" viewBox="0 0 20 20" fill="none" stroke="#3a8ee6" stroke-width="1.500"><path d="M3 2v15h15M3 12h5v5"/></svg></button>
      <button aria-label="捕捉" class="w-[45px] border-2 border-[#4aa3f5] bg-white flex items-center gap-2 pl-[3px]"><svg class="size-5" viewBox="0 0 20 20" fill="none" stroke="#3a8ee6" stroke-width="1.500"><path d="M3 3h16v16H3z"/><path fill="#f9b080" stroke="#f58220" d="M1 1h6v6H1z"/></svg><svg class="size-[6px]" viewBox="0 0 6 6"><path fill="#555" d="M0 0h6L3 6z"/></svg></button>
      <button aria-label="交点" class="ml-[3px] w-[32px] border border-gray-400 bg-[#cfcfd1] grid place-items-center"><svg class="size-5" viewBox="0 0 20 20" stroke="#444" stroke-width="1.500"><path d="M1 1l18 18M19 1L1 19"/></svg></button>
      <button aria-label="角度" class="ml-[3px] w-[45px] border border-gray-400 bg-[#cfcfd1] flex items-center gap-2 pl-[5px]"><svg class="size-5" viewBox="0 0 20 20" fill="none" stroke="#444" stroke-width="1.500"><path d="M17 2L2 17h18"/><circle cx="9" cy="10" r="1.500" fill="#333"/></svg><svg class="size-[6px]" viewBox="0 0 6 6"><path fill="#555" d="M0 0h6L3 6z"/></svg></button>
      <button aria-label="动态输入" class="w-[45px] border border-gray-400 bg-[#cfcfd1] flex items-center gap-2 pl-[5px]"><svg class="size-5" viewBox="0 0 20 20" stroke="#444" stroke-width="1.500"><path d="M5 1v8M1 5h8"/><path fill="#333" d="M8 12h11v5H8z"/></svg><svg class="size-[6px]" viewBox="0 0 6 6"><path fill="#555" d="M0 0h6L3 6z"/></svg></button>
      <button class="w-[91px] border border-gray-400 bg-[#cfcfd1]">跨图层选择</button>
      <button class="w-[76px] border border-gray-400 bg-[#cfcfd1]">折线选择</button>
    </div>
    <span class="ml-2">指定第一点</span>
    <span class="ml-auto pr-4">142.857 FPS</span>
  </div>
  <div class="h-[51px] bg-[#333526] border-t border-white flex items-center text-white">
    <button aria-label="开始" class="w-[63px] h-full pl-5"><svg class="size-[21px]" viewBox="0 0 21 21" fill="#fff"><path d="M0 3l9-1v8H0zM10 2l11-2v10H10zM0 11h9v8l-9-1zM10 11h11v10l-11-2z"/></svg></button>
    <button aria-label="Edge" class="relative w-[62px] h-full grid place-items-center"><svg class="size-[30px]" viewBox="0 0 30 30"><circle cx="15" cy="15" r="15" fill="url(#gEdge)"/><path fill="url(#gEdge2)" d="M0 14C1-5 29-5 30 12c0 8-9 8-12 6 3-3 2-8-4-9C7 8 1 10 0 14z"/><path fill="#0a3f86" d="M10 14c-3 8 4 16 16 10-4 6-12 7-17 4-6-4-5-12 1-14z"/><path fill="#333526" d="M17 18c3 4 9 4 13-1 0 3-1 5-2 6-4 2-11 2-12-2z"/></svg><i class="absolute bottom-0 h-[3px] w-[51px] bg-[#a9d5fb]"></i></button>
    <button aria-label="GTJ2018" class="relative w-[62px] h-full grid place-items-center bg-[#5c5e52]"><svg class="size-[30px]" viewBox="0 0 30 30"><rect width="30" height="30" rx="4" fill="#2a86e8"/><path stroke="#5aa6f5" d="M0 8h30M0 22h30M8 0v30M22 0v30"/><path fill="#fff" d="M6 6h19l-1 6h-6l1 13h-7l1-13H6z"/></svg><i class="absolute bottom-0 h-[3px] w-full bg-[#a9d5fb]"></i></button>
    <button aria-label="CAD" class="relative w-[62px] h-full grid place-items-center"><svg class="size-[30px]" viewBox="0 0 30 30"><rect x="1" y="1" width="28" height="28" rx="3" fill="#1268b8" stroke="#b5bcc4" stroke-width="2"/><path fill="none" stroke="#dfeefa" stroke-width="1.800" d="M11 10H5v11h6M12 22l3-13 3 13M13 17h4M20 10v11h2l4-2v-7l-4-2z"/></svg><i class="absolute bottom-0 h-[3px] w-[51px] bg-[#a9d5fb]"></i></button>
    <button aria-label="头像" class="relative w-[62px] h-full grid place-items-center"><svg class="size-[30px]" viewBox="0 0 30 30"><circle cx="15" cy="15" r="15" fill="#d9c4bf"/><path fill="#5b4444" d="M5 5c5-5 11-1 10 4l-3 3-8 2z"/><circle cx="11" cy="11" r="4" fill="#f3dbd0"/><circle cx="20" cy="14" r="6" fill="#eeb9a8"/><circle cx="20" cy="16" r="3.500" fill="#fbe9df"/><path fill="#8a5a5a" d="M7 20l8-2 3 9-8 1z"/><path fill="#f4efec" d="M16 21l9-1-5 9z"/></svg><i class="absolute bottom-0 h-[3px] w-[51px] bg-[#a9d5fb]"></i></button>
    <button aria-label="相册" class="relative w-[62px] h-full grid place-items-center"><svg class="size-[30px]" viewBox="0 0 30 30"><path fill="#7a5cf0" d="M1 25L9 11c2-3 4-2 5 1l3 7-4 6z"/><path fill="#9e8bf8" d="M12 25l8-10c2-2 4-2 5 1l4 9h-6l-3-4-3 4z"/><circle cx="20" cy="7" r="4" fill="#f9a11b"/></svg><i class="absolute bottom-0 h-[3px] w-[51px] bg-[#a9d5fb]"></i></button>
    <div class="ml-auto flex items-center gap-3">
      <svg class="w-4 h-3" viewBox="0 0 16 12" fill="none" stroke="#fff" stroke-width="1.500"><path d="M1 10l7-8 7 8"/></svg>
      <svg class="size-5" viewBox="0 0 20 20" fill="none" stroke="#fff" stroke-width="1.500"><path d="M10 17H1V3h3M6 3l13-2v11M6 9c1-4 6-4 7-1M13 5v3h-3M6 15v-3h3M7 12c1 3 4 2 5 0"/><circle cx="15" cy="16" r="4.500" fill="#ff9500" stroke="none"/></svg>
      <svg class="size-5" viewBox="0 0 20 20"><circle cx="8" cy="7" r="7.500" fill="#20c864"/><circle cx="14" cy="13" r="6" fill="#ececec"/><path stroke="#0a5a2a" stroke-width="1.500" d="M5 5h1.500M10 5h1.500"/><path stroke="#888" d="M11.500 12h1M15.500 12h1"/></svg>
      <svg class="w-[17px] h-5" viewBox="0 0 17 20"><path fill="#111" d="M8 0c5 0 6 4 6 8l3 6-3 1c-1 5-11 5-12 0l-2-1 3-6c0-4 0-8 5-8z"/><ellipse cx="8.500" cy="14" rx="4" ry="5" fill="#fff"/><path fill="#ff10b8" d="M3 9h11v3H3zM10 1l5-1v4z"/><circle cx="6.500" cy="4" r="1.500" fill="#fff"/><circle cx="10.500" cy="4" r="1.500" fill="#fff"/><path fill="#f9a11b" d="M5 6h7l-3 2zM2 18h5v2H2zM10 18h5v2h-5z"/></svg>
      <svg class="w-[21px] h-4" viewBox="0 0 21 16" stroke="#fff" fill="none"><path d="M1 2h4v4H1zM3 6v4h2M2 0v2M4 0v2"/><path fill="#fff" d="M7 4h11v8H7z"/><path d="M6 3h13v10H6zM20 6v4"/></svg>
      <svg class="w-[20px] h-4" viewBox="0 0 20 16" stroke="#fff" fill="none" stroke-width="1.300"><path d="M1 5h3l4-4v14l-4-4H1zM10 6c1 1 1 3 0 4M13 4c2 2 2 6 0 8"/><path stroke="#888" d="M16 2c3 3 3 9 0 12"/></svg>
      <svg class="size-4" viewBox="0 0 16 16" stroke="#ddd" fill="none" stroke-width="1.500"><path d="M1 15C1 7 7 1 15 1M5 15c0-6 4-10 10-10M9 15c0-4 2-6 6-6"/><circle cx="14" cy="14" r="1" fill="#fff"/></svg>
      <span class="text-xl w-[14px] text-center">A</span>
      <svg class="size-[20px] mx-[6px]" viewBox="0 0 20 20"><rect x="1" y="1" width="18" height="18" rx="3" fill="#f4511e"/><path fill="none" stroke="#fff" stroke-width="3" d="M15 5C7 3 4 6 7 9s8 1 7 4-5 3-9 2"/></svg>
      <div class="w-[82px] text-center text-[15px] leading-[23px]"><div>10:02</div><div>2021/3/17</div></div>
      <svg class="ml-2 w-5 h-5" viewBox="0 0 20 20" fill="none" stroke="#fff" stroke-width="1.300"><path d="M1 1h18v14h-7l-2 3-2-3H1z"/></svg>
      <div class="ml-[14px] mr-1 w-px h-[50px] bg-gray-500"></div>
    </div>
  </div>
</footer>

<script>
const $ = id => document.getElementById(id);
const ico = (n, c = 'size-5 shrink-0') => `<svg class="${c}" fill="none" stroke="#4a90dc" stroke-width="1.5" aria-hidden="true"><use href="#${n}"/></svg>`;
const arrow = (c = '#555') => `<svg class="size-[7px] shrink-0 ml-1" viewBox="0 0 6 6"><path fill="${c}" d="M0 1h6L3 5z"/></svg>`;

// Quick access bar: [icon, name, cell width]
$('quick').innerHTML = [['q-new','新建',29],['q-open','打开',29],['q-save','保存',29],['q-undo','撤销',40,1],['q-redo','重做',41,2],['q-sum','汇总',28],['q-calc','计算',30],['q-find','查找',29],['q-glass','查看',29],['q-brush','画笔',28],['q-grid','轴网',29],['q-add','添加',27]]
  .map(([i, n, w, a]) => `<button aria-label="${n}" class="flex items-center shrink-0" style="width:${w}px">${ico(i, 'size-[19px]')}${a ? arrow(a == 2 ? '#bbb' : '#555') : ''}</button>`).join('')
  + '<svg class="w-[7px] h-[8px] shrink-0" viewBox="0 0 7 8"><path fill="#555" d="M0 0h7v1.500H0zM0 3h7L3.500 7z"/></svg>';

$('tabs').innerHTML = ['开始','工程设置','建模','视图','工具','工程量','云应用']
  .map(t => `<a href="#" class="px-4 leading-6 ${t == '建模' ? 'bg-[#59a5f5] text-white rounded-t-sm' : 'text-gray-600'}">${t}</a>`).join('');

// Ribbon groups: columns of [icon, label, menu arrow, disabled]
const col = (w, items) => `<div class="flex flex-col shrink-0" style="width:${w}px">${items.map(([i, t, a, d]) =>
  `<button ${d ? 'disabled' : ''} class="h-[29px] flex items-center gap-1 whitespace-nowrap ${d ? 'text-gray-400' : ''}">${ico(i)}${t}${a ? arrow(d ? '#bbb' : '#555') : ''}</button>`).join('')}</div>`;
const group = (w, name, body, pad, menu = 1) => `<section class="flex flex-col shrink-0 border-r border-gray-300" style="width:${w}px">
  <div class="flex pt-0.5 h-[92px]" style="padding-left:${pad}px">${body}</div>
  <button class="h-6 flex items-center justify-center gap-1">${name}${menu ? arrow() : ''}</button></section>`;
$('ribbon').innerHTML =
  group(182, '选择', `<button class="w-[38px] mr-3 pt-[6px] flex flex-col items-center gap-[7px] whitespace-nowrap"><svg class="w-[37px] h-[37px] shrink-0" viewBox="0 0 37 37" fill="none"><path fill="#e9edf6" stroke="#5a9be6" d="M1 1h35v35H1z"/><path fill="#5a9be6" d="M0 0h37v7H0z"/><path stroke="#f5b731" stroke-width="2" stroke-dasharray="3 2" d="M36 13H10v22"/><path fill="#3474c4" d="M25 21l11 12-7-1-4 3z"/></svg>选择</button>`
    + col(100, [['pick','拾取构件'],['batch','批量选择'],['attr','按属性选择']]), 16)
  + group(243, 'CAD操作', col(100, [['replace','查找替换'],['scale','设置比例'],['restore','还原CAD']]) + col(120, [['floor','识别楼层表'],['cadopt','CAD识别选项']]), 11)
  + group(345, '通用操作', col(82, [['define','定义'],['cloud','云检查'],['lock','锁定',1]]) + col(139, [['copyfloor','复制到其它层',1],['autoalign','自动平齐板',1,1],['axis','两点辅轴',1]]) + col(110, [['length','长度标注',1],['store','图元存盘',1],['filter','图元过滤',0,1]]), 11)
  + group(296, '修改', col(68, [['copy','复制'],['move','移动'],['mirror','镜像']]) + col(67, [['extend','延伸',0,1],['trim','修剪',0,1],['offset','偏移']]) + col(68, [['break','打断',0,1],['merge','合并'],['split','分割']]) + col(80, [['align','对齐',1],['erase','删除'],['rotate','旋转']]), 11)
  + group(149, '绘图', `<button class="w-[36px] mr-[10px] pt-[6px] flex flex-col items-center gap-[7px]"><svg class="w-9 h-[37px] shrink-0" viewBox="0 0 36 37"><path stroke="#888" d="M18 0v12M18 24v13M0 18h12M24 18h12"/><circle cx="18" cy="18" r="5" fill="#4a90dc"/></svg>点</button>
    <button class="w-[50px] h-[84px] mt-1 bg-[#c9daf1] pt-[2px] flex flex-col items-center gap-[7px]"><svg class="w-[38px] h-[37px] shrink-0" viewBox="0 0 38 37" fill="#fff" stroke="#4a90dc" stroke-width="1.500"><path stroke="#777" d="M4 33L34 4"/><path d="M1 32h4v4H1zM33 1h4v4h-4z"/></svg>直线</button>
    <div class="flex flex-col items-center gap-[9px] ml-[5px] pt-1"><svg class="size-5" viewBox="0 0 20 20" fill="#fff" stroke="#4a90dc"><path fill="none" stroke="#777" d="M3 17C3 9 8 3 17 3"/><path d="M1 16h3v3H1zM15 1h4v4h-4zM6 5h4v4H6z"/></svg><svg class="size-5" viewBox="0 0 20 20" fill="none" stroke="#777"><circle cx="10" cy="10" r="9"/><path stroke="#4a90dc" d="M10 10l5-5M8.500 8.500h3v3h-3z"/></svg><svg class="size-5" viewBox="0 0 20 20" fill="#fff" stroke="#777"><path d="M3 4h14v12H3z"/><path stroke="#4a90dc" d="M1 15h3v3H1zM15 2h4v4h-4z"/></svg></div>`, 14)
  + group(433, '筏板基础二次编辑', `<button class="w-[60px] mr-[7px] pt-[6px] flex flex-col items-center whitespace-nowrap"><svg class="w-9 h-[37px] shrink-0 mb-[7px]" viewBox="0 0 36 37" fill="none" stroke="#4a90dc" stroke-width="1.500"><path d="M9 2v12M18 2v12M27 2v20M0 8h36M0 16h10M20 16h16M0 25h8M24 25h12M9 30v7M18 32v5"/><path stroke="#f58220" stroke-width="3" d="M15 18l14 18"/><path stroke="#f58220" d="M10 14l8 8M18 14l-8 8M10 24v6M7 27h6"/></svg>智能布置<svg class="size-[7px] mt-[7px] shrink-0" viewBox="0 0 6 6"><path fill="#555" d="M0 1h6L3 5z"/></svg></button>`
    + col(113, [['slope3','三点变斜',1],['section','设置变截面'],['slope','设置边坡']]) + col(127, [['unslope','取消边坡'],['viewrebar','查看板内钢筋'],['elev','查改标高']]) + col(110, [['earth','生成土方'],['beamsplit','按梁分割板']]), 9, 0);

$('combos').innerHTML = [['楼层','基础层'],['类别','基础'],['构件类型','筏板基础'],['构件','基础底板-1'],['分层','分层1'],['偏移','不偏移']]
  .map(([l, v], i) => `<span class="relative ${i == 5 ? 'w-[73px]' : 'w-[123px]'}"><select aria-label="${l}" class="appearance-none w-full h-[27px] bg-white border border-gray-400 pl-1 leading-5"><option>${v}</option></select><svg class="absolute right-1.5 top-2.5 size-[7px] pointer-events-none" viewBox="0 0 6 6"><path fill="#444" d="M0 1h6L3 5z"/></svg></span>`).join('');

// Navigation tree
const folder = (t, o) => `<li class="h-[30px] flex items-center pl-[3px] gap-2">${ico(o ? 'folder-open' : 'folder', 'size-[19px]')}${t}</li>`;
$('nav').innerHTML = ['梁','板','装配式','空心楼盖','楼梯','装修','土方'].map(t => folder(t)).join('') + folder('基础', 1)
  + [['n-beam','基础梁(F)'],['n-raft','筏板基础(M)'],['n-main','筏板主筋(R)'],['n-neg','筏板负筋(X)'],['n-band','基础板带(W)'],['n-pit','集水坑(K)'],['n-pier','柱墩(Y)'],['n-iso','独立基础(D)'],['n-strip','条形基础(T)'],['n-cap','桩承台(V)'],['n-pile','桩(U)'],['n-cush','垫层(X)'],['n-ditch','地沟(G)'],['n-brick','砖胎膜']]
    .map(([i, t]) => `<li class="h-[30px] flex items-center pl-[50px]"><span class="h-[26px] flex items-center gap-2 pl-1 pr-1.5 ${i == 'n-raft' ? 'bg-[#c9daf1]' : ''}">${ico(i, 'size-[19px]')}${t}</span></li>`).join('')
  + folder('其它') + folder('自定义');

const box = (n, s) => `<input type="checkbox" aria-label="${n}" ${s == 1 ? 'checked' : ''} class="appearance-none align-middle size-[17px] rounded-[3px] border ${s == 2 ? 'border-gray-400 bg-[#8fc3fb] shadow-[inset_0_0_0_2px_#fff,inset_0_0_0_3px_#3a8ee6]' : 'border-gray-500 bg-white'} checked:bg-[#4b9ff8] checked:border-[#4b9ff8] inline-grid place-content-center checked:before:block checked:before:w-[9px] checked:before:h-[5px] checked:before:border-l-2 checked:before:border-b-2 checked:before:border-white checked:before:-rotate-45 checked:before:mb-0.5">`;

$('props').innerHTML = [['名称','基础底板-1'],['厚度(mm)','2200',1],['材质','现浇混凝土',0],['混凝土类型','(碎石混凝土 ...',0],['混凝土强度等级','(C30)',0],['混凝土外加剂','(无)'],['泵送类型','(混凝土泵)'],['类别','有梁式',0],['顶标高(m)','-5.2',0]]
  .map(([n, v, c], i) => `<tr class="h-[26px] whitespace-nowrap"><td class="text-center border border-l-0 border-gray-300 ${i == 1 ? 'bg-[#7db8f8] text-white font-semibold' : 'bg-[#eee] text-gray-700'}">${i + 1}</td><td class="border border-gray-300 pl-1 ${i < 8 ? 'text-[#1a5af5]' : ''}">${n}</td><td class="border border-gray-300 pl-1">${v}</td><td class="border border-gray-300 text-center leading-none ${i == 1 ? 'bg-[#d6e8fc] outline-2 -outline-offset-2 outline-gray-500' : ''}">${c === undefined ? '' : box(n, c)}</td></tr>`).join('');

// Layer table: ">" marks a group heading
$('layers').innerHTML = '独立柱装修 单梁装修 >土方 大开挖土方 基槽土方 基坑土方 大开挖灰土回填 基槽灰土回填 基坑灰土回填 房心回填 >基础 基础梁 筏板基础 筏板主筋 筏板负筋 基础板带 集水坑 柱墩 独立基础 条形基础 桩承台 桩 垫层 地沟'.split(' ')
  .map(t => {
    const g = t[0] == '>', n = g ? t.slice(1) : t;
    const last = t == '单梁装修' || t == '房心回填';
    const s = t == '>基础' ? 2 : t == '筏板主筋' ? 0 : 1;
    const name = g
      ? `<span class="flex h-full items-center pl-[4px]"><span class="size-4 rounded-xs border border-gray-500 grid place-items-center"><i class="w-2 h-px bg-gray-800"></i></span><span class="ml-2">${n}</span></span>`
      : `<span class="flex h-full items-center pl-3"><span class="relative h-full w-5"><i class="absolute left-0 top-0 w-full h-1/2 border-l border-b border-gray-200"></i>${last ? '' : '<i class="absolute left-0 top-1/2 h-1/2 border-l border-gray-200"></i>'}</span><span class="ml-2">${n}</span></span>`;
    return `<tr class="whitespace-nowrap"><td class="border border-l-0 border-gray-300 p-0 h-[26px]"><div class="ml-[10px] h-[25px] border-l border-gray-200">${name}</div></td><td class="border border-gray-300 p-0 text-center leading-none ${s == 0 ? 'outline-2 -outline-offset-2 outline-gray-500' : ''}">${box('显示图元 ' + n, s)}</td><td class="border border-gray-300 p-0 text-center leading-none">${box('显示名称 ' + n, 0)}</td></tr>`;
  }).join('');

// Canvas: repeated drawing symbols
const use = (id, x, y) => `<use href="#${id}" x="${x}" y="${y}"/>`;
const xs = [705.5, 798, 890, 983, 1075, 1167.5, 1260, 1352.5, 1445, 1537];
$('piles').innerHTML = [210, 302, 394.5, 487, 579.5].map(y => xs.map(x => use('pile', x, y)).join('')).join('')
  + [705.5, 798, 915.5, 1033, 1125.5].map(x => use('pile', x, 671.5)).join('');
$('blocks').innerHTML = [198, 314, 391, 468, 546].map(y => use('sq', 1348.5, y) + use('sq', 1497, y)).join('')
  + '<rect x="1433.500" y="234.500" width="43" height="43" fill="url(#gh)"/><rect x="1433.500" y="234.500" width="43" height="43" fill="url(#hc)" stroke="#e6e600"/><path stroke="#8a1500" d="M1454.500 226v59"/>'
  + use('sqr', 1375.5, 256) + use('sqr', 1378, 525) + use('sqr', 1496.5, 599) + use('col', 1138, 256) + use('col', 1138, 361.5)
  + [210, 302, 394.5, 487].map(y => `<circle cx="1352.500" cy="${y}" r="7.500" fill="#55b5b8" fill-opacity=".7"/>`).join('');
$('dims').innerHTML = [['582',691,796],['2368',768,796],['2582',899,796],['500',982,796],['1910',1045,796],['590',1111,796],['150',1131,796],['1375',1170,796],['8100',1421,796],['2950',753,817],['5582',978,817],['5550',1272,817],['5350',1561,817],['4500',1300,922],['4500',1538,922],['700',814,522],['700',851,522],['750',1107,522],['750',1147,522],['1',1047,727],['-',1047,740],['2',1371,652],['-',1371,665]]
  .map(([t, x, y]) => `<text x="${x}" y="${y}">${t}</text>`).join('')
  + [['750',891,568],['750',891,608],['1400',759,626],['1400',1050,626],['750',1204,568],['750',1204,608],['1000',1241,602],['1375',1241,665],['150',955,711],['150',1535,620]]
  .map(([t, x, y]) => `<text transform="translate(${x} ${y}) rotate(-90)">${t}</text>`).join('');
</script>
</body>
</html>
